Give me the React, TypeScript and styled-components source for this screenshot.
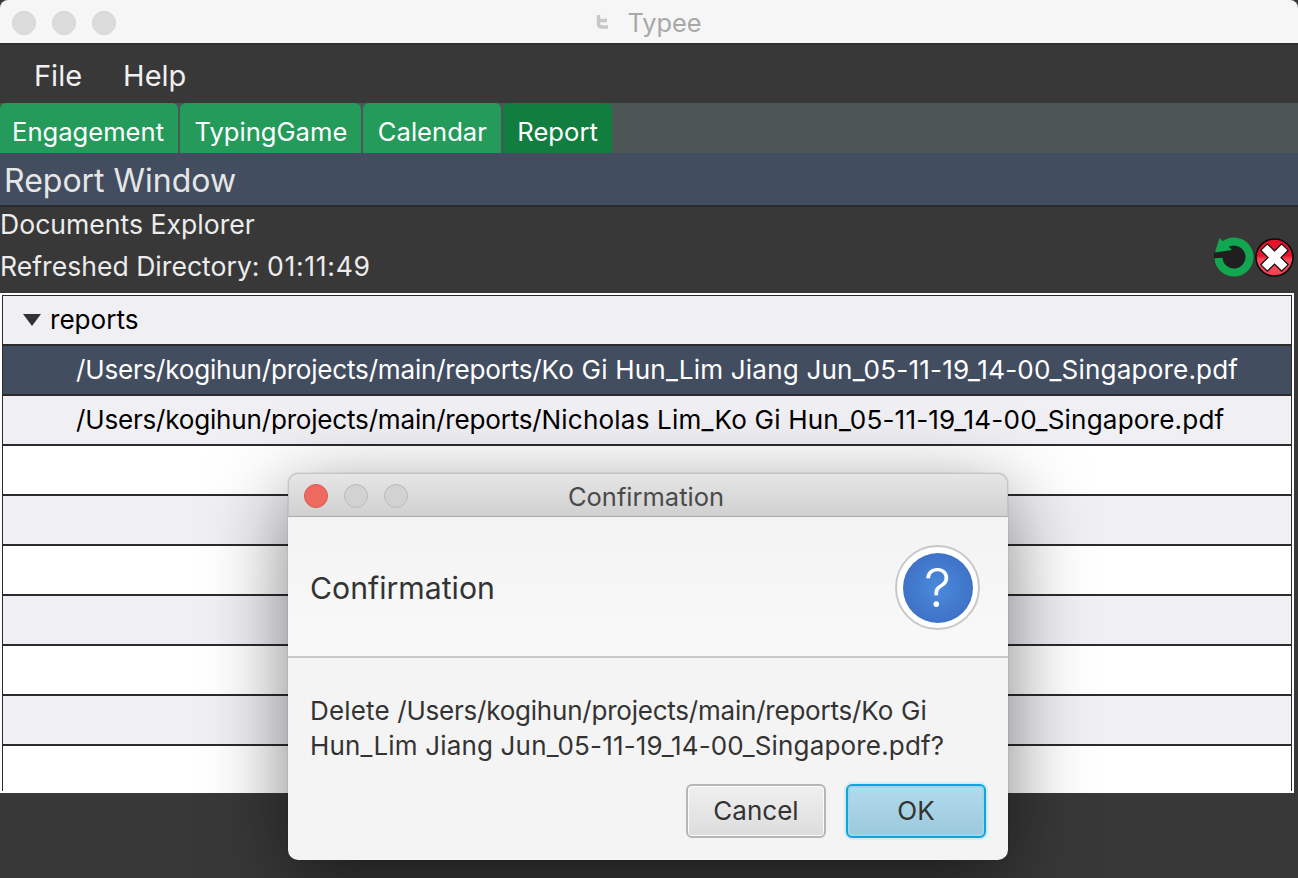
import React from "react";
import styled, { createGlobalStyle } from "styled-components";

const GlobalStyle = createGlobalStyle`
  html, body {
    margin: 0;
    padding: 0;
    background: #ffffff;
  }
  * {
    box-sizing: border-box;
  }
`;

const Window = styled.div`
  position: relative;
  width: 1298px;
  height: 878px;
  overflow: hidden;
  display: flex;
  flex-direction: column;
  background: #383838;
  font-family: Inter, "Liberation Sans", sans-serif;
`;

const TitleBar = styled.div`
  position: relative;
  flex: 0 0 45px;
  display: flex;
  align-items: center;
  justify-content: center;
  gap: 18px;
  padding-top: 1px;
  background: #f6f6f6;
  border-radius: 8px 8px 0 0;
  border-bottom: 2px solid #303030;
  color: #a8a8a8;
  font-size: 25.4px;
`;

const Lights = styled.div<{ $left: number }>`
  position: absolute;
  left: ${(p) => p.$left}px;
  top: 50%;
  margin-top: 1px;
  transform: translateY(-50%);
  display: flex;
  gap: 16px;
`;

const Light = styled.span<{ $red?: boolean; $flat?: boolean }>`
  display: block;
  width: 24px;
  height: 24px;
  border-radius: 50%;
  background: ${(p) => (p.$red ? "#ee6a5f" : p.$flat ? "#dcdcdc" : "#d2d2d2")};
  border: 1px solid ${(p) => (p.$red ? "#d9574d" : p.$flat ? "#d2d2d2" : "#b9b9b9")};
`;

const MenuBar = styled.div`
  flex: 0 0 58px;
  display: flex;
  align-items: center;
  gap: 41px;
  padding: 3px 0 0 34px;
  color: #f0f0f0;
  font-size: 29px;
`;

const TabBar = styled.div`
  flex: 0 0 50px;
  display: flex;
  gap: 2px;
  background: #4b5655;
`;

const Tab = styled.div<{ $active?: boolean }>`
  display: flex;
  align-items: center;
  height: 50px;
  padding: 6px 14px 0 14.5px;
  border-radius: 6px 6px 0 0;
  background: ${(p) => (p.$active ? "#117d3f" : "#249b5a")};
  color: #ffffff;
  font-size: 25.6px;

  &:first-child {
    padding-left: 12px;
  }
`;

const Header = styled.div`
  flex: 0 0 54px;
  display: flex;
  align-items: center;
  padding: 2px 0 0 4px;
  background: #434d60;
  border-bottom: 2px solid #2b2b2b;
  color: #e6e6e6;
  font-size: 32px;
`;

const Explorer = styled.div`
  flex: 0 0 86px;
  display: flex;
  justify-content: space-between;
  align-items: flex-end;
  padding: 0 4px 15px 0;
  color: #ececec;
  font-size: 26.6px;
`;

const ExplorerText = styled.div`
  display: flex;
  flex-direction: column;
  gap: 12px;
  margin-bottom: -3px;
  line-height: 30px;
`;

const Clock = styled.span`
  letter-spacing: 0.7px;
`;

const ExplorerActions = styled.div`
  display: flex;
  align-items: center;
`;

const TreePanel = styled.div`
  flex: 0 0 500px;
  width: 1294px;
  height: 500px;
  padding: 2px;
  background: #ffffff;
`;

const TreeFrame = styled.div`
  height: 496px;
  overflow: hidden;
  border: 1px solid #2b2b2b;
  border-bottom: none;
`;

const Row = styled.div<{ $tone: "plain" | "alt" | "selected"; $indent?: number }>`
  display: flex;
  align-items: center;
  gap: 9px;
  height: 50px;
  padding-left: ${(p) => p.$indent ?? 0}px;
  padding-bottom: 1px;
  border-bottom: 2px solid #2b2b2b;
  background: ${(p) => (p.$tone === "selected" ? "#434d60" : p.$tone === "alt" ? "#f0eff4" : "#ffffff")};
  color: ${(p) => (p.$tone === "selected" ? "#ffffff" : "#000000")};
  font-size: 26.1px;
  white-space: pre;
`;

const Arrow = styled.span`
  width: 0;
  height: 0;
  border-left: 9px solid transparent;
  border-right: 9px solid transparent;
  border-top: 12px solid #333333;
`;

const PathName = styled.span`
  white-space: pre;
  letter-spacing: 0.17px;
`;

const Folder = styled.span`
  letter-spacing: -0.22px;
`;

const Dialog = styled.div`
  position: absolute;
  left: 288px;
  top: 473px;
  width: 720px;
  height: 387px;
  display: flex;
  flex-direction: column;
  background: #f4f4f4;
  border-radius: 10px;
  box-shadow: 0 0 1px rgba(0, 0, 0, 0.5), 0 22px 80px rgba(0, 0, 0, 0.5);
  color: #333333;
`;

const DialogTitle = styled.div`
  position: relative;
  flex: 0 0 44px;
  display: flex;
  align-items: center;
  justify-content: center;
  padding: 2px 4px 0 0;
  background: linear-gradient(#e6e6e6, #d0d0d0);
  border: 1px solid #c4c4c4;
  border-bottom: 1px solid #aaaaaa;
  border-radius: 10px 10px 0 0;
  color: #4a4a4a;
  font-size: 25.5px;
`;

const DialogHeader = styled.div`
  flex: 0 0 141px;
  display: flex;
  align-items: center;
  justify-content: space-between;
  padding: 2px 28px 0 22px;
  background: linear-gradient(#f3f3f3, #f9f9f9);
  border-bottom: 2px solid #c9c9c9;
  font-size: 30.2px;
`;

const QuestionRing = styled.div`
  width: 85px;
  height: 85px;
  display: flex;
  align-items: center;
  justify-content: center;
  border-radius: 50%;
  border: 2px solid #c8c8c8;
  background: #ffffff;
`;

const QuestionDisc = styled.div`
  width: 70px;
  height: 70px;
  display: flex;
  align-items: center;
  justify-content: center;
  border-radius: 50%;
  background: radial-gradient(circle, #4a8bdc 0%, #3a68bf 100%);
  color: #ffffff;
  font-size: 54px;
  font-weight: 300;
`;

const DialogBody = styled.div`
  flex: 1;
  display: flex;
  flex-direction: column;
  justify-content: space-between;
  padding: 35px 22px 22px 22px;
`;

const Message = styled.div`
  font-size: 26px;
  line-height: 35px;
  white-space: pre;
  letter-spacing: 0.17px;
`;

const Buttons = styled.div`
  display: flex;
  justify-content: flex-end;
  gap: 20px;
`;

const Button = styled.div<{ $primary?: boolean }>`
  width: 140px;
  height: 54px;
  display: flex;
  align-items: center;
  justify-content: center;
  padding-bottom: 2px;
  border-radius: 6px;
  border: 2px solid ${(p) => (p.$primary ? "#0ca6dd" : "#b6b6b6")};
  background: ${(p) =>
    p.$primary
      ? "linear-gradient(#b2dbef, #9cc8dc)"
      : "linear-gradient(#f0f0f0, #dcdcdc)"};
  box-shadow: ${(p) =>
    p.$primary
      ? "0 0 0 2px #d6ecf5, inset 0 0 0 2px #a4d2e6"
      : "inset 0 0 0 1px #fbfbfb"};
  color: #333333;
  font-size: 26px;
`;

const RefreshIcon = () => (
  <svg width="42" height="42" viewBox="-21 -21 42 42">
    <circle r="12.5" fill="#1f1f1f" />
    <path d="M -20 -5 L -10 -6 L -10 2 L -20 2 Z" fill="#1f1f1f" />
    <path
      d="M -9 -12.6 A 15.5 15.5 0 1 1 -15.5 1"
      fill="none"
      stroke="#13a650"
      strokeWidth="8"
    />
    <path d="M -14.5 -19 L -19 -4.5 L -2 -7 Z" fill="#13a650" />
  </svg>
);

const DeleteIcon = () => (
  <svg width="39" height="39" viewBox="-19.5 -19.5 39 39">
    <defs>
      <linearGradient id="deleteFill" x1="0" y1="0" x2="0" y2="1">
        <stop offset="0" stopColor="#e5142b" />
        <stop offset="0.45" stopColor="#e5142b" />
        <stop offset="0.55" stopColor="#f7495a" />
        <stop offset="1" stopColor="#f54254" />
      </linearGradient>
    </defs>
    <circle r="18.5" fill="url(#deleteFill)" stroke="#0a0a0a" strokeWidth="1.6" />
    <path d="M -10.8 -10.8 L 10.8 10.8 M 10.8 -10.8 L -10.8 10.8" stroke="#111111" strokeWidth="10.5" />
    <path d="M -10 -10 L 10 10 M 10 -10 L -10 10" stroke="#ffffff" strokeWidth="8" />
  </svg>
);

const AppLogo = () => (
  <svg width="13" height="14" viewBox="0 0 13 14">
    <path d="M 2.5 0 V 9 Q 2.5 12 6 12 H 12 M 2.5 5.5 H 11" fill="none" stroke="#c8c8c8" strokeWidth="3.4" />
  </svg>
);

const tabs = ["Engagement", "TypingGame", "Calendar", "Report"];
const reportsDir = "/Users/kogihun/projects/main/reports/";

const App: React.FC = () => {
  return (
    <>
      <GlobalStyle />
      <Window>
        <TitleBar>
          <Lights $left={12}>
            <Light $flat />
            <Light $flat />
            <Light $flat />
          </Lights>
          <AppLogo />
          <span>Typee</span>
        </TitleBar>

        <MenuBar>
          <span>File</span>
          <span>Help</span>
        </MenuBar>

        <TabBar>
          {tabs.map((tab) => (
            <Tab key={tab} $active={tab === "Report"}>
              {tab}
            </Tab>
          ))}
        </TabBar>

        <Header>Report Window</Header>

        <Explorer>
          <ExplorerText>
            <span>Documents Explorer</span>
            <span>
              Refreshed Directory: <Clock>01:11:49</Clock>
            </span>
          </ExplorerText>
          <ExplorerActions>
            <RefreshIcon />
            <DeleteIcon />
          </ExplorerActions>
        </Explorer>

        <TreePanel>
          <TreeFrame>
            <Row $tone="alt" $indent={20}>
              <Arrow />
              reports
            </Row>
            <Row $tone="selected" $indent={73}>
              <PathName>
                <Folder>{reportsDir}</Folder>Ko Gi Hun_Lim Jiang Jun_05-11-19_14-00_Singapore.pdf
              </PathName>
            </Row>
            <Row $tone="alt" $indent={73}>
              <PathName>
                <Folder>{reportsDir}</Folder>Nicholas Lim_Ko Gi Hun_05-11-19_14-00_Singapore.pdf
              </PathName>
            </Row>
            <Row $tone="plain" />
            <Row $tone="alt" />
            <Row $tone="plain" />
            <Row $tone="alt" />
            <Row $tone="plain" />
            <Row $tone="alt" />
            <Row $tone="plain" />
          </TreeFrame>
        </TreePanel>

        <Dialog>
          <DialogTitle>
            <Lights $left={15}>
              <Light $red />
              <Light />
              <Light />
            </Lights>
            Confirmation
          </DialogTitle>
          <DialogHeader>
            <span>Confirmation</span>
            <QuestionRing>
              <QuestionDisc>?</QuestionDisc>
            </QuestionRing>
          </DialogHeader>
          <DialogBody>
            <Message>
              Delete <Folder>{reportsDir}</Folder>Ko Gi
              <br />
              Hun_Lim Jiang Jun_05-11-19_14-00_Singapore.pdf?
            </Message>
            <Buttons>
              <Button>Cancel</Button>
              <Button $primary>OK</Button>
            </Buttons>
          </DialogBody>
        </Dialog>
      </Window>
    </>
  );
};

export default App;
